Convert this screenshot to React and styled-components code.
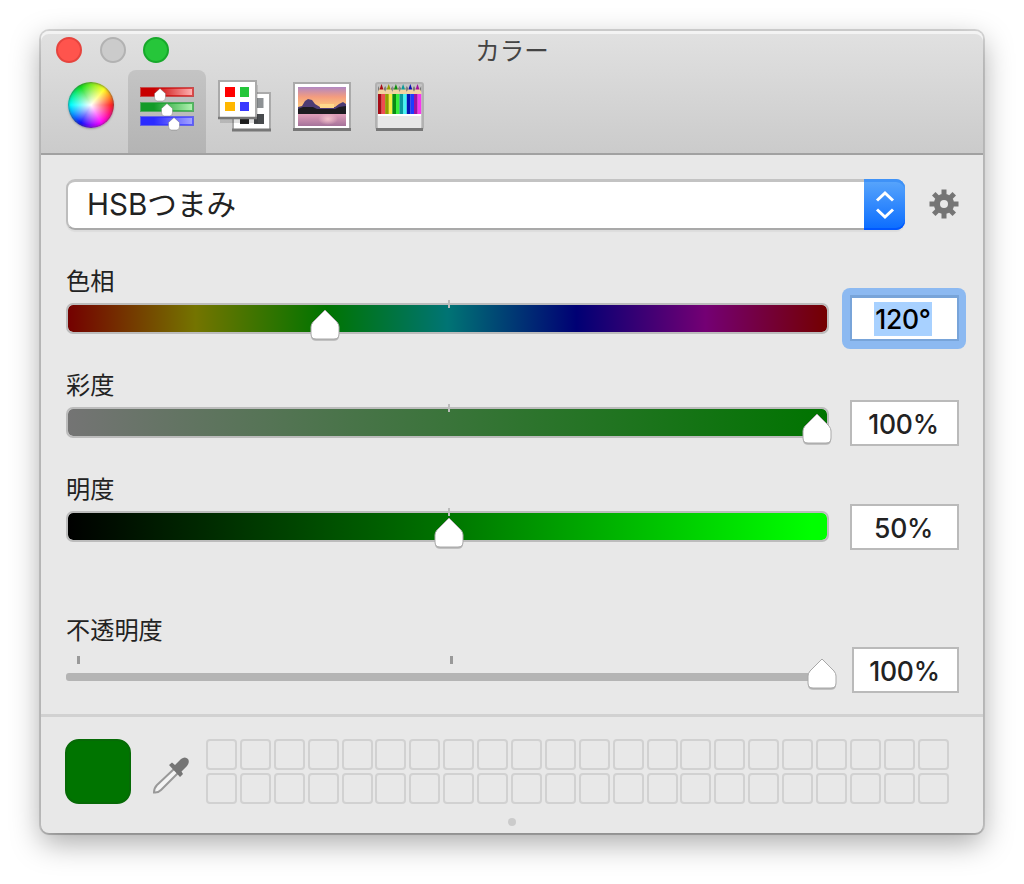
import React from "react";
import styled, { createGlobalStyle } from "styled-components";

const GlobalStyle = createGlobalStyle`
  * { box-sizing: border-box; }
  body {
    margin: 0;
    background: #fff;
    color: #222;
    font-family: Inter, "Noto Sans CJK JP", sans-serif;
  }
`;

const Desktop = styled.main`
  width: 1024px;
  height: 884px;
  padding: 31px 41px 51px;
  overflow: hidden;
`;

const Window = styled.section`
  height: 802px;
  display: flex;
  flex-direction: column;
  background: #e8e8e8;
  border-radius: 8px;
  box-shadow: 0 0 0 2px rgba(0, 0, 0, 0.14), 0 2px 1px rgba(0, 0, 0, 0.1),
    0 10px 30px rgba(0, 0, 0, 0.34);
`;

const Header = styled.header`
  height: 124px;
  background: linear-gradient(#e1e1e1, #cbcbcb);
  border-bottom: 2px solid #a1a1a1;
  border-radius: 8px 8px 0 0;
  box-shadow: inset 0 3px 0 #f3f3f3;
`;

const TitleBar = styled.div`
  height: 39px;
  display: grid;
  grid-template-columns: 1fr auto 1fr;
  align-items: center;
  padding: 0 15px 2px;
`;

const Lights = styled.div`
  display: flex;
  gap: 17.5px;
`;

const Light = styled.span`
  width: 26px;
  height: 26px;
  border-radius: 50%;
  background: ${(p) => p.$fill};
  border: 2px solid ${(p) => p.$edge};
`;

const Title = styled.h1`
  margin: 0;
  font: 400 24.5px/37px "Noto Sans CJK JP", sans-serif;
  color: #444;
`;

const Toolbar = styled.nav`
  height: 83px;
  display: flex;
  padding-left: 10px;
`;

const Tab = styled.button`
  width: 77.4px;
  height: 83px;
  padding: 7px 0 0;
  border: 0;
  border-radius: 8px 8px 0 0;
  background: ${(p) => (p.$active ? "linear-gradient(#c4c4c4, #b4b4b4)" : "none")};
  display: flex;
  justify-content: center;
  align-items: flex-start;
`;

const Wheel = styled.span`
  width: 46px;
  height: 46px;
  margin: 5px 0 0 2px;
  border-radius: 50%;
  background: radial-gradient(circle, #fff 0%, rgba(255, 255, 255, 0.5) 30%, rgba(255, 255, 255, 0) 62%),
    conic-gradient(from 90deg, #f22, #f0f 60deg, #11f 120deg, #0ff 180deg, #1d2 240deg, #ff2 310deg, #f22);
  box-shadow: inset 0 0 2px 1px rgba(60, 60, 60, 0.55), 0 1px 2px rgba(0, 0, 0, 0.25);
`;

const Glyph = styled.svg`
  display: block;
  flex: none;
  overflow: visible;
  margin-top: ${(p) => p.$drop || 0}px;
`;

const Body = styled.div`
  height: 559px;
  padding: 24px 24px 0 25px;
`;

const ModeRow = styled.div`
  display: flex;
  align-items: center;
  justify-content: space-between;
  height: 51px;
  margin-bottom: 34px;
`;

const Select = styled.div`
  width: 839px;
  height: 51px;
  display: flex;
  border-radius: 9px;
  background: #fff;
  border: 2px solid #bdbdbd;
  border-top: 3px solid #c3c3c3;
  border-bottom-color: #a9a9a9;
  border-right: 0;
  box-shadow: 0 2px 1px rgba(0, 0, 0, 0.05);
`;

const SelectText = styled.span`
  flex: 1;
  padding-left: 19px;
  font-size: 29.6px;
  line-height: 44px;
  white-space: nowrap;
`;

const Stepper = styled.span`
  width: 41px;
  height: 51px;
  margin-top: -3px;
  display: flex;
  align-items: center;
  justify-content: center;
  border-radius: 0 9px 9px 0;
  background: linear-gradient(#5ba7fb, #0a6cff);
  box-shadow: inset 0 3px 0 #3f92f7, inset 0 -2px 0 #0057ff;
`;

const SliderRow = styled.div`
  display: flex;
  align-items: flex-start;
  height: 104px;
`;

const OpacityRow = styled(SliderRow)`
  height: 90px;
  margin-top: 37px;
`;

const SliderColumn = styled.div`
  width: 763px;
`;

const Label = styled.div`
  height: 34px;
  font: 400 24.2px/32px "Noto Sans CJK JP", sans-serif;
  color: #222;
`;

const Track = styled.div`
  position: relative;
  height: 31px;
  margin-top: 5px;
  border-radius: 7px;
  border: 2px solid #bcbcbc;
  background: linear-gradient(to right, ${(p) => p.$colors});
  background-clip: padding-box;
`;

const CenterTick = styled.span`
  position: absolute;
  left: 380px;
  top: -5px;
  width: 2px;
  height: 8px;
  background: #bcbcbc;
`;

const Thumb = styled(Glyph)`
  position: absolute;
  top: ${(p) => p.$top}px;
  left: ${(p) => p.$left}px;
`;

const LineTrack = styled.div`
  position: relative;
  height: 8px;
  border-radius: 3px;
  background: #b4b4b4;
`;

const LineTicks = styled.div`
  display: flex;
  gap: 370px;
  height: 17px;
  padding-left: 11px;
  margin-top: 9px;
`;

const LineTick = styled.span`
  width: 3px;
  height: 8px;
  background: #999;
`;

const Field = styled.div`
  width: ${(p) => p.$width || 109}px;
  height: 46px;
  margin: ${(p) => p.$top || 32}px 0 0 ${(p) => p.$gap || 21}px;
  display: flex;
  align-items: center;
  justify-content: center;
  background: #fff;
  border: 2px solid #bababa;
  font-size: 26.5px;
  font-weight: 450;
  letter-spacing: -0.3px;
  padding: 2px 2px 0 0;
`;

const FocusRing = styled.div`
  border-radius: 8px;
  background: #8cb9f1;
  width: 124px;
  height: 61px;
  margin: 24px -7px 0 13px;
  padding: 7px 7px 8px 8px;
`;

const FocusedField = styled(Field)`
  margin: 0;
  padding: 0 3px 0 0;
  border: 2px solid #78a4d9;
  border-top-width: 3px;
`;

const Selection = styled.span`
  height: 34px;
  width: 58px;
  line-height: 35px;
  text-align: center;
  color: #000;
  background: #a8d1ff;
`;

const Footer = styled.footer`
  height: 119px;
  border-top: 3px solid #d1d1d1;
  padding: 22px 34px 0 24px;
`;

const Palette = styled.div`
  display: flex;
  height: 65px;
  align-items: center;
`;

const Swatch = styled.div`
  width: 66px;
  height: 65px;
  border-radius: 14px;
  background: #007400;
  border: 2px solid #066a06;
`;

const Dropper = styled(Glyph)`
  margin: 8px 16px 0 21px;
`;

const Cells = styled.div`
  display: grid;
  grid-template-columns: repeat(22, 31px);
  grid-auto-rows: 31px;
  gap: 3px 2.9px;
`;

const Cell = styled.span`
  border: 2px solid #d1d1d1;
  border-radius: 4px;
`;

const Grip = styled.span`
  display: block;
  width: 8px;
  height: 8px;
  margin: 14px 0 0 443px;
  border-radius: 50%;
  background: #cbcbcb;
`;

const thumbPath = "M15 1 L27 13 Q29 15.5 29 18 V25 Q29 30 24 30 H6 Q1 30 1 25 V18 Q1 15.5 3 13 Z";

function SliderThumb({ left, top }) {
  return (
    <Thumb $left={left} $top={top} width="30" height="33" viewBox="0 0 30 33">
      <path d={thumbPath} transform="translate(0 1.8)" fill="#000" opacity=".22" />
      <path d={thumbPath} fill="#fff" stroke="#a8a8a8" strokeWidth="1" />
    </Thumb>
  );
}

function SlidersIcon() {
  const rows = [
    ["red", 0, "#c80000", "#ffb5b5", 20],
    ["green", 15, "#129b28", "#b3f3b3", 27],
    ["blue", 29, "#2b2bff", "#a5a5ff", 34],
  ];
  return (
    <Glyph $drop={10} width="54" height="48" viewBox="0 0 54 48">
      <defs>
        {rows.map(([id, , from, to]) => (
          <linearGradient id={id} key={id}>
            <stop offset=".25" stopColor={from} />
            <stop offset="1" stopColor={to} />
          </linearGradient>
        ))}
      </defs>
      {rows.map(([id, y, from, , x]) => (
        <g key={id}>
          <rect x="1" y={y + 1} width="52" height="8" fill={`url(#${id})`} stroke={from} strokeOpacity=".6" strokeWidth="2" />
          <path
            d={`M${x} ${y + 1.5} l5.500 5 v4 q0 3.500 -3 3.500 h-5 q-3 0 -3 -3.500 v-4z`}
            fill="#fff"
            stroke="#555"
            strokeOpacity=".35"
          />
        </g>
      ))}
    </Glyph>
  );
}

function PalettesIcon() {
  return (
    <Glyph $drop={3} width="53" height="52" viewBox="0 0 53 52">
      <rect x="15" y="13" width="37" height="37" fill="#fff" stroke="#aaa" strokeWidth="2" />
      <path d="M14 50 H53" stroke="#777" strokeWidth="3" />
      <rect x="35.500" y="18" width="10" height="10" fill="#8e9295" />
      <rect x="22" y="34" width="9" height="10" fill="#222" />
      <rect x="36" y="34" width="10" height="10" fill="#484b4e" />
      <rect x="2" y="5" width="38" height="38" fill="#000" opacity=".12" />
      <rect x="1" y="1" width="37" height="37" fill="#fff" stroke="#aaa" strokeWidth="2" />
      <path d="M0 38 H39" stroke="#777" strokeWidth="2.500" />
      <rect x="7" y="7" width="10" height="10" fill="#f00" />
      <rect x="22" y="7" width="9" height="10" fill="#24c63a" />
      <rect x="7" y="22" width="10" height="9" fill="#ffb700" />
      <rect x="22" y="22" width="9" height="9" fill="#3838ff" />
    </Glyph>
  );
}

function PictureIcon() {
  return (
    <Glyph $drop={5} width="58" height="49" viewBox="0 0 58 49">
      <defs>
        <linearGradient id="sky" x2="0" y2="1">
          <stop offset="0" stopColor="#b188c3" />
          <stop offset=".45" stopColor="#f49c7e" />
          <stop offset="1" stopColor="#ffd37a" />
        </linearGradient>
        <linearGradient id="lake" x2="0" y2="1">
          <stop offset="0" stopColor="#e6a3bd" />
          <stop offset="1" stopColor="#a5739a" />
        </linearGradient>
        <radialGradient id="glow">
          <stop offset="0" stopColor="#f3c3cb" />
          <stop offset="1" stopColor="#f3c3cb" stopOpacity="0" />
        </radialGradient>
      </defs>
      <rect x="1" y="1" width="56" height="46" fill="#fff" stroke="#aaa" strokeWidth="2" />
      <path d="M0 47.500 H58" stroke="#777" strokeWidth="3" />
      <rect x="5" y="5" width="48" height="22" fill="url(#sky)" />
      <rect x="5" y="31" width="48" height="13" fill="url(#lake)" />
      <ellipse cx="35" cy="37" rx="10" ry="6" fill="url(#glow)" />
      <path d="M5 32 V25 L9 24 L12 19 L15 17 L19 18 L22 22 L27 25 H42 L46 22 L50 20 L53 22 V32Z" fill="#4d3c74" />
      <path d="M27 22 H41 V26 H27Z" fill="#ffd98c" />
      <path d="M5 32 V27 L10 25 L20 25 L24 27 L42 27 L46 25 L53 24 V32Z" fill="#1c1b20" />
    </Glyph>
  );
}

function PencilsIcon() {
  const pencils = [
    ["#a60c16", "#f04c50"],
    ["#92a000", "#f5f142"],
    ["#078c12", "#35ef3c"],
    ["#08999e", "#45f4f4"],
    ["#0712b4", "#1b3cff"],
    ["#a012a0", "#f735ee"],
  ];
  return (
    <Glyph $drop={5} width="49" height="49" viewBox="0 0 49 49">
      <rect x="1" y="1" width="47" height="46" rx="2" fill="#c4c4c4" stroke="#b2b2b2" strokeWidth="2" />
      {pencils.map(([dark, light], i) => (
        <g key={dark} transform={`translate(${3 + i * 7.2} 0)`}>
          <path d="M0 4 L2.500 8.500 L0 10Z M7.200 4 L4.800 8.500 L7.200 10Z" fill="#777" />
          <path d="M0 12 V9.500 L3.500 3 L7.200 9.500 V12Z" fill="#f1d3a0" />
          <path d="M1.500 7.500 L3.500 2 L5.500 7.500Z" fill={dark} />
          <rect y="12" width="3.600" height="20" fill={dark} />
          <rect x="3.600" y="12" width="3.600" height="20" fill={light} />
        </g>
      ))}
      <rect x="3" y="32" width="43" height="2" fill="#fff" />
      <rect x="3" y="34" width="43" height="12" fill="#e8e8e8" />
      <path d="M1 47.500 H48" stroke="#777" strokeWidth="3" />
    </Glyph>
  );
}

function Gear() {
  const teeth = [0, 45, 90, 135];
  return (
    <Glyph $drop={-2} width="30" height="30" viewBox="0 0 30 30">
      {teeth.map((a) => (
        <rect key={a} x="12.500" y="0.500" width="5" height="29" fill="#757575" transform={`rotate(${a} 15 15)`} />
      ))}
      <circle cx="15" cy="15" r="10.200" fill="#757575" />
      <circle cx="15" cy="15" r="4" fill="#e8e8e8" />
    </Glyph>
  );
}

const channels = [
  {
    name: "色相",
    colors: "#740000, #747400 16.8%, #007400 34%, #007474 50%, #000074 67%, #740074 84%, #740000",
    left: 242,
    value: "120°",
    focused: true,
  },
  { name: "彩度", colors: "#747474, #007400", left: 734, value: "100%" },
  { name: "明度", colors: "#000, #007400 50%, #00ff00 98%", left: 366, value: "50%" },
];

export default function App() {
  return (
    <Desktop>
      <GlobalStyle />
      <Window>
        <Header>
          <TitleBar>
            <Lights>
              <Light $fill="#ff544d" $edge="#e6443e" />
              <Light $fill="#cbcbcb" $edge="#b2b2b2" />
              <Light $fill="#26c63a" $edge="#17a92b" />
            </Lights>
            <Title>カラー</Title>
          </TitleBar>
          <Toolbar>
            <Tab><Wheel /></Tab>
            <Tab $active><SlidersIcon /></Tab>
            <Tab><PalettesIcon /></Tab>
            <Tab><PictureIcon /></Tab>
            <Tab><PencilsIcon /></Tab>
          </Toolbar>
        </Header>
        <Body>
          <ModeRow>
            <Select>
              <SelectText>HSBつまみ</SelectText>
              <Stepper>
                <Glyph width="18" height="28" viewBox="0 0 18 28" fill="none" stroke="#fff" strokeWidth="3">
                  <path d="M1 9.500 L9 2 L17 9.500 M1 18.500 L9 26 L17 18.500" />
                </Glyph>
              </Stepper>
            </Select>
            <Gear />
          </ModeRow>
          {channels.map((c) => (
            <SliderRow key={c.name}>
              <SliderColumn>
                <Label>{c.name}</Label>
                <Track $colors={c.colors}>
                  <CenterTick />
                  <SliderThumb left={c.left} top={4} />
                </Track>
              </SliderColumn>
              {c.focused ? (
                <FocusRing>
                  <FocusedField><Selection>{c.value}</Selection></FocusedField>
                </FocusRing>
              ) : (
                <Field>{c.value}</Field>
              )}
            </SliderRow>
          ))}
          <OpacityRow>
            <SliderColumn>
              <Label>不透明度</Label>
              <LineTicks>
                <LineTick />
                <LineTick />
              </LineTicks>
              <LineTrack>
                <SliderThumb left={741} top={-15} />
              </LineTrack>
            </SliderColumn>
            <Field $width={107} $top={34} $gap={23}>100%</Field>
          </OpacityRow>
        </Body>
        <Footer>
          <Palette>
            <Swatch />
            <Dropper width="38" height="38" viewBox="0 0 38 38">
              <path d="M22 12 L5 28 Q2 31 2 35.500 Q6 36 9 33 L26 16" fill="#f4f4f4" stroke="#999" strokeWidth="2" />
              <path d="M17 8 L20 5.500 L23 8 L29 2 Q33 -1 36 2 Q38 5 35 9 L29.500 14.500 L31 17 L28 20 Z" fill="#757575" />
            </Dropper>
            <Cells>
              {Array.from({ length: 44 }, (_, i) => (
                <Cell key={i} />
              ))}
            </Cells>
          </Palette>
          <Grip />
        </Footer>
      </Window>
    </Desktop>
  );
}
